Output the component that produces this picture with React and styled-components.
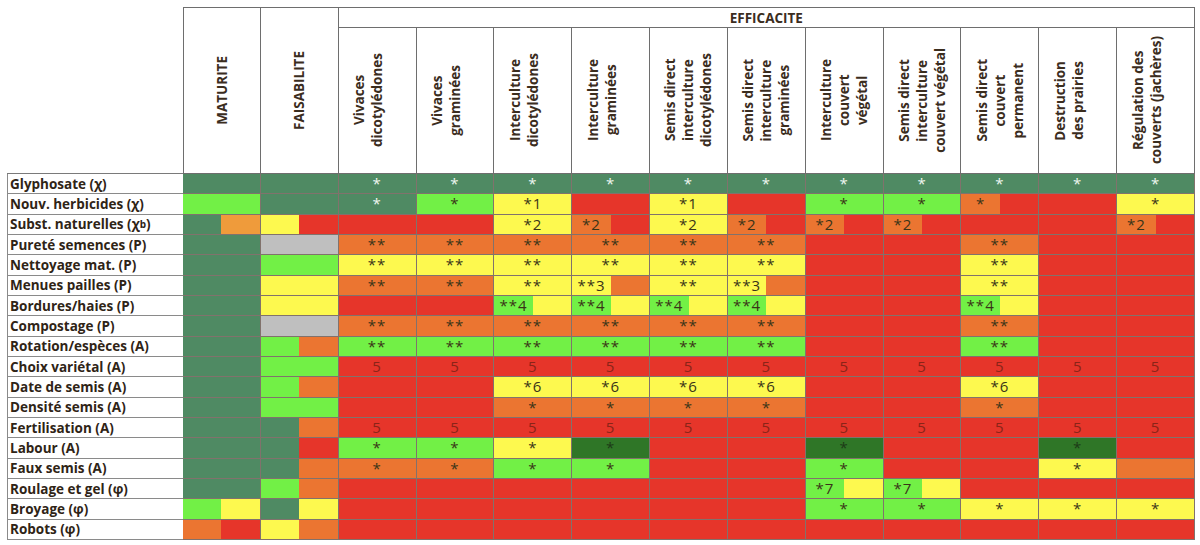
import React from 'react'
import styled, { createGlobalStyle } from 'styled-components'

const GlobalStyle = createGlobalStyle`
  html, body {
    margin: 0;
    padding: 0;
    background: #ffffff;
  }
  body {
    font-family: "Open Sans", "Liberation Sans", sans-serif;
  }
`

const colors = {
  D: '#4f8a63',
  G: '#72f046',
  Y: '#fdf94f',
  O: '#eb7531',
  L: '#ef9b3b',
  R: '#e6352a',
  X: '#bfbfbf',
  K: '#2f7627',
}

const textColor = (c) => {
  if (c === 'D') return '#eef7f0'
  if (c === 'K') return '#1d3a17'
  if (c === 'R') return '#8a2418'
  return '#3a3418'
}

const Page = styled.div`
  padding: 7px 0 0 7px;
`

const Table = styled.div`
  display: grid;
  width: 1188px;
  grid-template-columns: 176px repeat(13, 1fr);
  grid-template-rows: 21px 146px repeat(18, 20.33px);
  color: #3b2d1e;
`

const Corner = styled.div`
  grid-row: span 2;
  border-bottom: 1px solid #7a7a7a;
`

const GroupHead = styled.div`
  grid-row: span 2;
  display: flex;
  align-items: center;
  justify-content: center;
  border-top: 1px solid #6e6e6e;
  border-right: 1px solid #6e6e6e;
  border-bottom: 1px solid #6e6e6e;
  border-left: ${(p) => (p.$first ? '1px solid #6e6e6e' : 'none')};
`

const EffHead = styled.div`
  grid-column: span 11;
  display: flex;
  align-items: center;
  justify-content: center;
  font-weight: 700;
  font-size: 13.5px;
  border-top: 1px solid #6e6e6e;
  border-right: 1px solid #6e6e6e;
  border-bottom: 1px solid #6e6e6e;
`

const ColHead = styled.div`
  display: flex;
  align-items: center;
  justify-content: center;
  padding-right: ${(p) => (p.$short ? '18px' : '0')};
  border-right: 1px solid #6e6e6e;
  border-bottom: 1px solid #6e6e6e;
`

const Vertical = styled.div`
  writing-mode: vertical-rl;
  transform: rotate(180deg);
  text-align: center;
  font-weight: 700;
  font-size: 13.5px;
  line-height: 18px;
  white-space: nowrap;
`

const Label = styled.div`
  display: flex;
  align-items: center;
  padding-left: 2px;
  border-left: 1px solid #8a8a8a;
  border-bottom: 1px solid #8a8a8a;
  font-weight: 700;
  font-size: 13.5px;
  color: #2f2416;
  white-space: nowrap;
  overflow: hidden;
`

const Sub = styled.span`
  font-size: 10px;
  font-weight: 700;
`

const Cell = styled.div`
  display: flex;
  border-right: 1px solid rgba(45, 20, 10, 0.6);
  border-bottom: 1px solid rgba(45, 20, 10, 0.6);
  overflow: hidden;
`

const Half = styled.div`
  flex: 1;
  display: flex;
  align-items: center;
  justify-content: center;
  background: ${(p) => colors[p.$c]};
  color: ${(p) => textColor(p.$c)};
  font-size: 15px;
  letter-spacing: 1px;
  line-height: 1;
`

const groups = ['MATURITE', 'FAISABILITE']

const heads = [
  ['Vivaces', 'dicotylédones'],
  ['Vivaces', 'graminées'],
  ['Interculture', 'dicotylédones'],
  ['Interculture', 'graminées'],
  ['Semis direct', 'interculture', 'dicotylédones'],
  ['Semis direct', 'interculture', 'graminées'],
  ['Interculture', 'couvert', 'végétal'],
  ['Semis direct', 'interculture', 'couvert végétal'],
  ['Semis direct', 'couvert', 'permanent'],
  ['Destruction', 'des prairies'],
  ['Régulation des', 'couverts (jachères)'],
]

const rep = (v, n) => Array(n).fill(v)

const rows = [
  ['Glyphosate (χ)', ['D', 'D', ...rep('D *', 11)]],
  ['Nouv. herbicides (χ)', ['G', 'D', 'D *', 'G *', 'Y *1', 'R', 'Y *1', 'R', 'G *', 'G *', 'O/R *', 'R', 'Y *']],
  [<>Subst. naturelles (χ<Sub>b</Sub>)</>, ['D/L', 'Y/R', 'R', 'R', 'Y *2', 'O/R *2', 'Y *2', 'O/R *2', 'O/R *2', 'O/R *2', 'R', 'R', 'O/R *2']],
  ['Pureté semences (P)', ['D', 'X', ...rep('O **', 6), 'R', 'R', 'O **', 'R', 'R']],
  ['Nettoyage mat. (P)', ['D', 'G', ...rep('Y **', 6), 'R', 'R', 'Y **', 'R', 'R']],
  ['Menues pailles (P)', ['D', 'Y', 'O **', 'O **', 'Y **', 'Y/O **3', 'Y **', 'Y/O **3', 'R', 'R', 'Y **', 'R', 'R']],
  ['Bordures/haies (P)', ['D', 'Y', 'R', 'R', ...rep('G/Y **4', 4), 'R', 'R', 'G/Y **4', 'R', 'R']],
  ['Compostage (P)', ['D', 'X', ...rep('O **', 6), 'R', 'R', 'O **', 'R', 'R']],
  ['Rotation/espèces (A)', ['D', 'G/O', ...rep('G **', 6), 'R', 'R', 'G **', 'R', 'R']],
  ['Choix variétal (A)', ['D', 'G', ...rep('R 5', 11)]],
  ['Date de semis (A)', ['D', 'G/O', 'R', 'R', ...rep('Y *6', 4), 'R', 'R', 'Y *6', 'R', 'R']],
  ['Densité semis (A)', ['D', 'G', 'R', 'R', ...rep('O *', 4), 'R', 'R', 'O *', 'R', 'R']],
  ['Fertilisation (A)', ['D', 'D/O', ...rep('R 5', 11)]],
  ['Labour (A)', ['D', 'D/R', 'G *', 'G *', 'Y *', 'K *', 'R', 'R', 'K *', 'R', 'R', 'K *', 'R']],
  ['Faux semis (A)', ['D', 'D/O', 'O *', 'O *', 'G *', 'G *', 'R', 'R', 'G *', 'R', 'R', 'Y *', 'O']],
  ['Roulage et gel (φ)', ['D', 'G/O', ...rep('R', 6), 'G/Y *7', 'G/Y *7', 'R', 'R', 'R']],
  ['Broyage (φ)', ['G/Y', 'D/Y', ...rep('R', 6), 'G *', 'G *', 'Y *', 'Y *', 'Y *']],
  ['Robots (φ)', ['O/R', 'Y/O', ...rep('R', 11)]],
]

function DataCell({ spec }) {
  const [cols, text = ''] = spec.split(' ')
  const [left, right] = cols.split('/')
  if (!right) {
    return (
      <Cell>
        <Half $c={left}>{text}</Half>
      </Cell>
    )
  }
  return (
    <Cell>
      <Half $c={left}>{text}</Half>
      <Half $c={right} />
    </Cell>
  )
}

export default function App() {
  return (
    <Page>
      <GlobalStyle />
      <Table>
        <Corner />
        {groups.map((g, i) => (
          <GroupHead key={g} $first={i === 0}>
            <Vertical>{g}</Vertical>
          </GroupHead>
        ))}
        <EffHead>EFFICACITE</EffHead>
        {heads.map((lines, i) => (
          <ColHead key={i} $short={lines.length === 2}>
            <Vertical>
              {lines.map((l, j) => (
                <div key={j}>{l}</div>
              ))}
            </Vertical>
          </ColHead>
        ))}
        {rows.map(([label, cells], r) => (
          <React.Fragment key={r}>
            <Label>{label}</Label>
            {cells.map((c, k) => (
              <DataCell key={k} spec={c} />
            ))}
          </React.Fragment>
        ))}
      </Table>
    </Page>
  )
}
